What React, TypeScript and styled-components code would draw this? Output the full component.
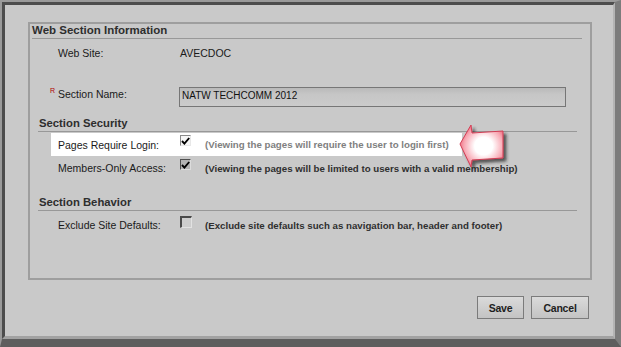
import React from 'react';
import styled, { createGlobalStyle } from 'styled-components';

const Global = createGlobalStyle`
  html, body { margin: 0; padding: 0; background: #c9c9c9; }
  body { font-family: "Liberation Sans", Arial, sans-serif; }
`;

const Frame = styled.div`
  position: relative;
  width: 621px;
  height: 347px;
  box-sizing: border-box;
  border-top: 2px solid #9a9a9a;
  border-left: 2px solid #9a9a9a;
  border-right: 6px solid #7c7c7c;
  border-bottom: 8px solid #5e5e5e;
  background: #c9c9c9;
`;

const Inner = styled.div`
  height: 100%;
  box-sizing: border-box;
  border-top: 3px solid #4d4d4d;
  border-left: 3px solid #4d4d4d;
  border-right: 2px solid #b4b4b4;
  border-bottom: 3px solid #a2a2a2;
  padding: 17px 0 0 23px;
  display: flex;
  flex-direction: column;
`;

const Panel = styled.section`
  width: 564px;
  height: 258px;
  box-sizing: border-box;
  border: 2px solid #9e9e9e;
`;

const Title = styled.h2`
  margin: 0 8px 0 2px;
  padding: 0 0 1px 0;
  font-size: 11.5px;
  font-weight: bold;
  line-height: 13px;
  color: #2e2e2e;
  border-bottom: 1px solid #989898;
`;

const Heading = styled.h3<{ $top: number }>`
  margin: ${(p) => p.$top}px 13px 0 8px;
  padding: 0 0 1px 1px;
  font-size: 11.3px;
  font-weight: bold;
  line-height: 13px;
  color: #2e2e2e;
  border-bottom: 1px solid #989898;
`;

const Row = styled.div<{ $top: number; $h: number; $hl?: boolean }>`
  display: grid;
  grid-template-columns: 122px 25px auto;
  align-items: center;
  width: fit-content;
  height: ${(p) => p.$h}px;
  margin: ${(p) => p.$top}px 0 0 21px;
  padding: 0 13px 0 7px;
  background: ${(p) => (p.$hl ? '#ffffff' : 'transparent')};
`;

const Label = styled.span<{ $top?: boolean }>`
  font-size: 10.5px;
  color: #1a1a1a;
  white-space: nowrap;
  line-height: 14px;
  align-self: ${(p) => (p.$top ? 'start' : 'center')};
  ${(p) => (p.$top ? 'margin-left: -8px;' : '')}
`;

const Req = styled.span`
  display: inline-block;
  width: 8px;
  font-size: 7px;
  line-height: 7px;
  vertical-align: top;
  color: #b00000;
`;

const Value = styled.span`
  grid-column: 2 / span 2;
  font-size: 10.5px;
  color: #1a1a1a;
`;

const TextInput = styled.div`
  grid-column: 2 / span 2;
  width: 387px;
  height: 20px;
  box-sizing: border-box;
  margin-left: -1px;
  border: 1px solid #767676;
  padding: 2px 0 0 2px;
  font-size: 10px;
  line-height: 12px;
  color: #111;
  background: linear-gradient(#b9b9b9 0%, #c6c6c6 35%, #cbcbcb 100%);
`;

const Box = styled.span<{ $variant: 'light' | 'gray' | 'empty'; $mt: number }>`
  align-self: start;
  margin-top: ${(p) => p.$mt}px;
  width: ${(p) => (p.$variant === 'empty' ? 12 : 11)}px;
  height: ${(p) => (p.$variant === 'empty' ? 12 : 11)}px;
  box-sizing: border-box;
  display: flex;
  align-items: center;
  justify-content: center;
  border-style: solid;
  border-width: ${(p) => (p.$variant === 'empty' ? '2px 1px 1px 2px' : '1px')};
  border-color: ${(p) =>
    p.$variant === 'empty'
      ? '#4a4a4a #e2e2e2 #e2e2e2 #4a4a4a'
      : p.$variant === 'gray'
      ? '#4f4f4f #dcdcdc #dcdcdc #4f4f4f'
      : '#8a8a8a #e8e8e8 #e8e8e8 #8a8a8a'};
  background: ${(p) =>
    p.$variant === 'empty' ? '#cdcdcd' : p.$variant === 'gray' ? '#b3b3b3' : '#f6f6f6'};
`;

const Desc = styled.span<{ $muted?: boolean }>`
  font-size: 9.7px;
  font-weight: bold;
  white-space: nowrap;
  color: ${(p) => (p.$muted ? '#808080' : '#2f2f2f')};
`;

const Actions = styled.div`
  display: flex;
  justify-content: flex-end;
  gap: 7px;
  width: 564px;
  box-sizing: border-box;
  padding-right: 3px;
  margin-top: 16px;
`;

const Button = styled.button<{ $w: number }>`
  width: ${(p) => p.$w}px;
  height: 23px;
  padding: 0;
  border: 1px solid #7b7b7b;
  background: linear-gradient(#dadada, #c3c3c3);
  font-family: "Liberation Sans", Arial, sans-serif;
  font-size: 10.5px;
  font-weight: bold;
  letter-spacing: -0.2px;
  color: #1e1e1e;
`;

const Arrow = styled.svg`
  position: absolute;
  left: 453px;
  top: 116px;
`;

const Check = () => (
  <svg width="9" height="8" viewBox="0 0 9 8">
    <path d="M1 4 L3.4 6.6 L8.2 1" fill="none" stroke="#000" strokeWidth="1.9" />
  </svg>
);

export default function App() {
  return (
    <Frame>
      <Global />
      <Inner>
        <Panel>
          <Title>Web Section Information</Title>
          <Row $top={4} $h={19}>
            <Label>Web Site:</Label>
            <Value>AVECDOC</Value>
          </Row>
          <Row $top={25} $h={20}>
            <Label $top>
              <Req>R</Req>Section Name:
            </Label>
            <TextInput>NATW TECHCOMM 2012</TextInput>
          </Row>
          <Heading $top={10}>Section Security</Heading>
          <Row $top={1} $h={23} $hl>
            <Label>Pages Require Login:</Label>
            <Box $variant="light" $mt={2}>
              <Check />
            </Box>
            <Desc $muted>(Viewing the pages will require the user to login first)</Desc>
          </Row>
          <Row $top={1} $h={22}>
            <Label>Members-Only Access:</Label>
            <Box $variant="gray" $mt={2}>
              <Check />
            </Box>
            <Desc>(Viewing the pages will be limited to users with a valid membership)</Desc>
          </Row>
          <Heading $top={17}>Section Behavior</Heading>
          <Row $top={3} $h={22}>
            <Label>Exclude Site Defaults:</Label>
            <Box $variant="empty" $mt={2} />
            <Desc>(Exclude site defaults such as navigation bar, header and footer)</Desc>
          </Row>
        </Panel>
        <Actions>
          <Button $w={47}>Save</Button>
          <Button $w={58}>Cancel</Button>
        </Actions>
      </Inner>
      <Arrow width="60" height="58" viewBox="0 0 60 58">
        <defs>
          <radialGradient id="arrowFill" cx="0.55" cy="0.5" r="0.6">
            <stop offset="0" stopColor="#ffffff" />
            <stop offset="0.35" stopColor="#ffffff" />
            <stop offset="0.75" stopColor="#f8a9b4" />
            <stop offset="1" stopColor="#ec5c72" />
          </radialGradient>
          <filter id="arrowShadow" x="-30%" y="-30%" width="170%" height="170%">
            <feDropShadow dx="3" dy="3" stdDeviation="1.6" floodColor="#222" floodOpacity="0.7" />
          </filter>
        </defs>
        <path
          d="M5 26 L16 7 L17 15 L48 13 L48 40 L17 42 L16 49 Z"
          fill="url(#arrowFill)"
          stroke="#d23e55"
          strokeWidth="1"
          strokeLinejoin="round"
          filter="url(#arrowShadow)"
        />
      </Arrow>
    </Frame>
  );
}
